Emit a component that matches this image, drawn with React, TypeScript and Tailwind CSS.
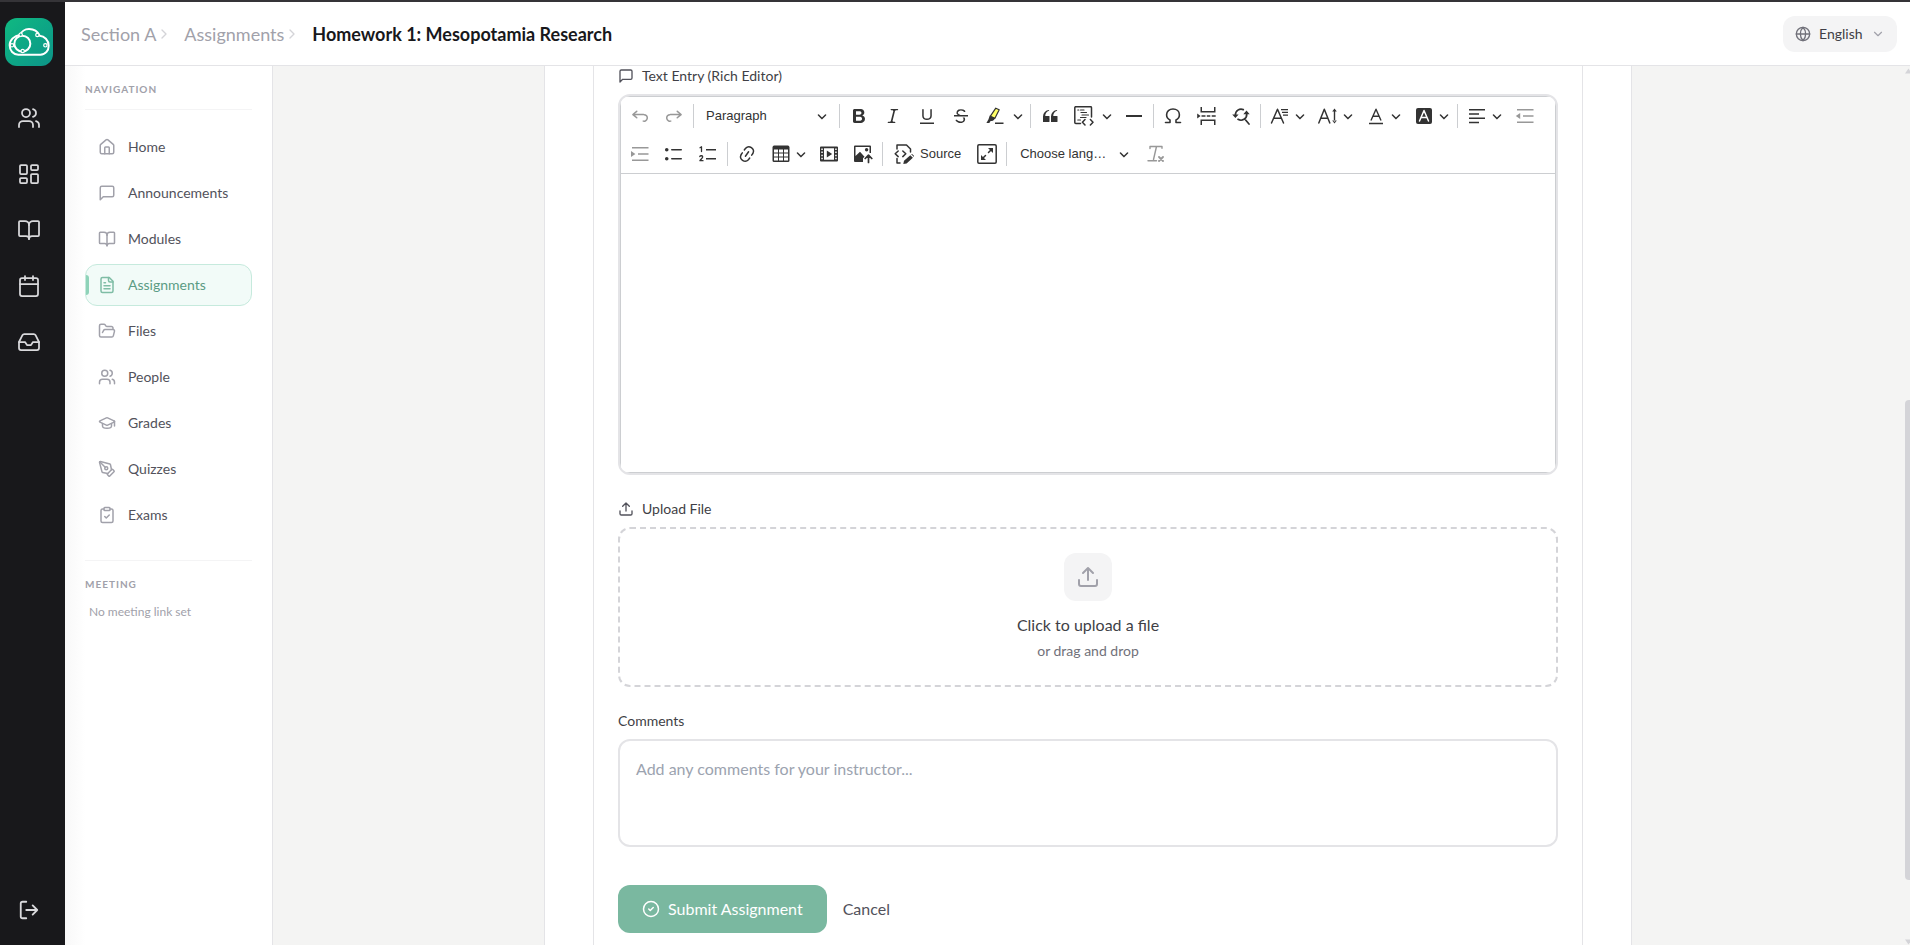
import React from "react";

type Icon = () => React.ReactElement;

/* ---------- outline icons ---------- */

function Line({ size, width = 2, children }: { size: number; width?: number; children: React.ReactNode }) {
  return (
    <svg
      width={size}
      height={size}
      viewBox="0 0 24 24"
      fill="none"
      stroke="currentColor"
      strokeWidth={width}
      strokeLinecap="round"
      strokeLinejoin="round"
      className="shrink-0"
      aria-hidden="true"
    >
      {children}
    </svg>
  );
}

const shapes = {
  users: (
    <>
      <path d="M16 21v-2a4 4 0 0 0-4-4H6a4 4 0 0 0-4 4v2" />
      <circle cx="9" cy="7" r="4" />
      <path d="M22 21v-2a4 4 0 0 0-3-3.87" />
      <path d="M16 3.13a4 4 0 0 1 0 7.75" />
    </>
  ),
  dashboard: (
    <>
      <rect width="7" height="9" x="3" y="3" rx="1" />
      <rect width="7" height="5" x="14" y="3" rx="1" />
      <rect width="7" height="9" x="14" y="12" rx="1" />
      <rect width="7" height="5" x="3" y="16" rx="1" />
    </>
  ),
  book: (
    <>
      <path d="M12 7v14" />
      <path d="M3 18a1 1 0 0 1-1-1V4a1 1 0 0 1 1-1h5a4 4 0 0 1 4 4 4 4 0 0 1 4-4h5a1 1 0 0 1 1 1v13a1 1 0 0 1-1 1h-6a3 3 0 0 0-3 3 3 3 0 0 0-3-3z" />
    </>
  ),
  calendar: (
    <>
      <path d="M8 2v4M16 2v4M3 10h18" />
      <rect width="18" height="18" x="3" y="4" rx="2" />
    </>
  ),
  inbox: (
    <>
      <path d="M22 12h-6l-2 3h-4l-2-3H2" />
      <path d="M5.45 5.11 2 12v6a2 2 0 0 0 2 2h16a2 2 0 0 0 2-2v-6l-3.45-6.89A2 2 0 0 0 16.76 4H7.24a2 2 0 0 0-1.79 1.11z" />
    </>
  ),
  logout: (
    <>
      <path d="M9 21H5a2 2 0 0 1-2-2V5a2 2 0 0 1 2-2h4" />
      <path d="m16 17 5-5-5-5M21 12H9" />
    </>
  ),
  home: (
    <>
      <path d="M15 21v-8a1 1 0 0 0-1-1h-4a1 1 0 0 0-1 1v8" />
      <path d="M3 10a2 2 0 0 1 .709-1.528l7-5.999a2 2 0 0 1 2.582 0l7 5.999A2 2 0 0 1 21 10v9a2 2 0 0 1-2 2H5a2 2 0 0 1-2-2z" />
    </>
  ),
  message: <path d="M21 15a2 2 0 0 1-2 2H7l-4 4V5a2 2 0 0 1 2-2h14a2 2 0 0 1 2 2z" />,
  file: (
    <>
      <path d="M15 2H6a2 2 0 0 0-2 2v16a2 2 0 0 0 2 2h12a2 2 0 0 0 2-2V7Z" />
      <path d="M14 2v4a2 2 0 0 0 2 2h4M10 9H8M16 13H8M16 17H8" />
    </>
  ),
  folder: (
    <path d="m6 14 1.5-2.9A2 2 0 0 1 9.24 10H20a2 2 0 0 1 1.94 2.5l-1.54 6a2 2 0 0 1-1.95 1.5H4a2 2 0 0 1-2-2V5a2 2 0 0 1 2-2h3.9a2 2 0 0 1 1.69.9l.81 1.2a2 2 0 0 0 1.67.9H18a2 2 0 0 1 2 2v2" />
  ),
  grades: (
    <>
      <path d="M21.42 10.922a1 1 0 0 0-.019-1.838L12.83 5.18a2 2 0 0 0-1.66 0L2.6 9.08a1 1 0 0 0 0 1.832l8.57 3.908a2 2 0 0 0 1.66 0z" />
      <path d="M22 10v6" />
      <path d="M6 12.5V16a6 3 0 0 0 12 0v-3.5" />
    </>
  ),
  pen: (
    <>
      <path d="M15.707 21.293a1 1 0 0 1-1.414 0l-1.586-1.586a1 1 0 0 1 0-1.414l5.586-5.586a1 1 0 0 1 1.414 0l1.586 1.586a1 1 0 0 1 0 1.414z" />
      <path d="m18 13-1.375-6.874a1 1 0 0 0-.746-.776L3.235 2.028a1 1 0 0 0-1.207 1.207L5.35 15.879a1 1 0 0 0 .776.746L13 18" />
      <path d="m2.3 2.3 7.286 7.286" />
      <circle cx="11" cy="11" r="2" />
    </>
  ),
  clipboard: (
    <>
      <rect width="8" height="4" x="8" y="2" rx="1" />
      <path d="M16 4h2a2 2 0 0 1 2 2v14a2 2 0 0 1-2 2H6a2 2 0 0 1-2-2V6a2 2 0 0 1 2-2h2" />
      <path d="m9 14 2 2 4-4" />
    </>
  ),
  upload: (
    <>
      <path d="M12 3v12M17 8l-5-5-5 5" />
      <path d="M21 15v4a2 2 0 0 1-2 2H5a2 2 0 0 1-2-2v-4" />
    </>
  ),
  check: (
    <>
      <circle cx="12" cy="12" r="10" />
      <path d="m9 12 2 2 4-4" />
    </>
  ),
  globe: (
    <>
      <circle cx="12" cy="12" r="10" />
      <path d="M12 2a14.5 14.5 0 0 0 0 20 14.5 14.5 0 0 0 0-20M2 12h20" />
    </>
  ),
  right: <path d="m9 18 6-6-6-6" />,
  down: <path d="m6 9 6 6 6-6" />,
};

function Logo() {
  return (
    <svg width="48" height="48" viewBox="0 0 144 144" fill="none" stroke="#fff" aria-hidden="true">
      <path
        strokeWidth="6"
        d="M40 110H106C122 110 131 97 131 83C131 67 118 54 104 53C98 40 86 33 72 33C59 33 49 41 46 50C27 53 14 66 14 82C14 98 25 110 40 110Z"
      />
      <circle cx="52" cy="77" r="24" strokeWidth="6" />
      <g strokeWidth="3.5" fill="#10a684">
        <circle cx="47" cy="50" r="5" />
        <circle cx="97" cy="51" r="5" />
        <circle cx="121" cy="82" r="5" />
        <circle cx="53" cy="99" r="5" />
        <circle cx="21" cy="82" r="5" />
      </g>
    </svg>
  );
}

/* ---------- editor icons, drawn on a 20 unit grid ---------- */

function Glyph({ children }: { children: React.ReactNode }) {
  return (
    <svg width="20" height="20" viewBox="0 0 20 20" fill="currentColor" className="shrink-0" aria-hidden="true">
      {children}
    </svg>
  );
}

function Stroke({ w = 1.5, children }: { w?: number; children: React.ReactNode }) {
  return (
    <g fill="none" stroke="currentColor" strokeWidth={w} strokeLinecap="round" strokeLinejoin="round">
      {children}
    </g>
  );
}

function Arrow() {
  return (
    <svg width="10" height="10" viewBox="0 0 10 10" fill="currentColor" className="shrink-0" aria-hidden="true">
      <path d="M.941 4.523a.75.75 0 1 1 1.06-1.06l3.006 3.005 3.005-3.005a.75.75 0 1 1 1.06 1.06l-3.549 3.55a.75.75 0 0 1-1.168-.136L.941 4.523z" />
    </svg>
  );
}

const undoPath =
  "m5.042 9.367 2.189 1.837a.75.75 0 0 1-.965 1.149l-3.788-3.18a.747.747 0 0 1-.21-.284.75.75 0 0 1 .17-.945L6.23 4.762a.75.75 0 1 1 .964 1.15L4.863 7.866h8.917A.75.75 0 0 1 14 7.9a4 4 0 1 1-1.477 7.718l.344-1.489a2.5 2.5 0 1 0 1.094-4.73l.008-.032H5.042z";

const Undo: Icon = () => <Glyph><path d={undoPath} /></Glyph>;
const Redo: Icon = () => <Glyph><path transform="matrix(-1 0 0 1 20 0)" d={undoPath} /></Glyph>;
const Bold: Icon = () => (
  <Glyph>
    <path d="M10.187 17H5.773c-.637 0-1.092-.138-1.364-.415-.273-.277-.409-.718-.409-1.323V4.738c0-.617.14-1.062.419-1.332.279-.27.73-.406 1.354-.406h4.68c.69 0 1.288.041 1.793.124.506.083.96.242 1.36.478.341.197.644.447.906.75a3.262 3.262 0 0 1 .808 2.162c0 1.401-.722 2.426-2.167 3.075C15.05 10.175 16 11.315 16 13.01a3.756 3.756 0 0 1-2.296 3.504 6.1 6.1 0 0 1-1.517.377c-.571.073-1.238.11-2 .11zm-.217-6.217H7v4.087h3.069c1.977 0 2.965-.69 2.965-2.072 0-.707-.256-1.22-.768-1.537-.512-.319-1.277-.478-2.296-.478zM7 5.13v3.619h2.606c.729 0 1.292-.067 1.69-.2a1.6 1.6 0 0 0 .91-.765c.165-.267.247-.566.247-.897 0-.707-.26-1.176-.778-1.409-.519-.232-1.31-.348-2.375-.348H7z" />
  </Glyph>
);
const Italic: Icon = () => (
  <Glyph>
    <path d="m9.586 14.633.021.004c-.036.335.095.655.393.962.082.083.173.15.274.201h1.474a.6.6 0 1 1 0 1.2H5.304a.6.6 0 0 1 0-1.2h1.15c.474-.07.809-.182 1.005-.334.157-.122.291-.32.404-.597l2.416-9.55a1.053 1.053 0 0 0-.281-.823 1.12 1.12 0 0 0-.442-.296H8.15a.6.6 0 0 1 0-1.2h6.443a.6.6 0 1 1 0 1.2h-1.195c-.376.056-.65.155-.823.296-.215.175-.423.439-.623.79l-2.366 9.347z" />
  </Glyph>
);
const Underline: Icon = () => (
  <Glyph>
    <path d="M3 18v-1.5h14V18zm2.2-8V3.6c0-.4.4-.6.8-.6.3 0 .7.2.7.6v6.2c0 2 1.3 2.8 3.2 2.8 1.9 0 3.4-.9 3.4-2.9V3.6c0-.3.4-.5.8-.5.3 0 .7.2.7.5V10c0 2.7-2.2 4-4.9 4-2.6 0-4.7-1.2-4.7-4z" />
  </Glyph>
);
const Strike: Icon = () => (
  <Glyph>
    <path d="M7 16.4c-.8-.4-1.5-.9-2.2-1.5a.6.6 0 0 1-.2-.5l.3-.6h1c1 1.2 2.1 1.7 3.7 1.7 1 0 1.8-.3 2.3-.6.6-.4.6-1.2.6-1.3.2-1.2-.9-2.1-.9-2.1h2.1c.3.7.4 1.2.4 1.7v.8l-.6 1.2c-.6.8-1.1 1-1.6 1.2a6 6 0 0 1-2.4.6c-1 0-1.8-.3-2.5-.6zM6.8 9 6 8.3c-.4-.5-.5-.8-.5-1.6 0-.7.1-1.3.5-1.8.4-.6 1-1 1.6-1.3a6.3 6.3 0 0 1 4.7 0 4 4 0 0 1 1.7 1l.3.7c0 .1.2.4-.2.7-.4.2-.9.1-1 0a3 3 0 0 0-1.2-1c-.4-.2-1-.3-2-.4-.7 0-1.4.2-2 .6-.8.6-1 .8-1 1.5 0 .8.5 1 1.2 1.5.6.4 1.1.7 1.9 1H6.8zM3 10.5V9h14v1.5z" />
  </Glyph>
);
const Highlight: Icon = () => (
  <Glyph>
    <path fill="#ffff66" stroke="currentColor" strokeWidth="1.2" strokeLinejoin="round" d="M10.8 2.2 14.2 3.8 9.8 12.4 5.4 10.2Z" />
    <path d="M4.8 9.6 10.2 12.5 8 14.8 5.3 15.2 4.4 17H1.4l2-3.4z" />
    <path d="M10 16.5h8.5V18H10z" />
  </Glyph>
);
const Quote: Icon = () => (
  <Glyph>
    <path d="M3 10.423a6.5 6.5 0 0 1 6.056-6.408l.038.67C6.448 5.423 5.354 7.663 5.22 10H9c.552 0 .5.432.5.986v4.511c0 .554-.448.503-1 .503h-5c-.552 0-.5-.449-.5-1.003v-4.574zm8 0a6.5 6.5 0 0 1 6.056-6.408l.038.67c-2.646.739-3.74 2.979-3.873 5.315H17c.552 0 .5.432.5.986v4.511c0 .554-.448.503-1 .503h-5c-.552 0-.5-.449-.5-1.003v-4.574z" />
  </Glyph>
);
const CodeBlock: Icon = () => (
  <Glyph>
    <Stroke w={1.5}>
      <path d="M6.5 17.5H1.8a1 1 0 0 1-1-1V1.7a1 1 0 0 1 1-1H16.5a1 1 0 0 1 1 1V11" />
      <path d="M11 13.5 8.4 16.2 11 18.9M16.4 13.5 19 16.2 16.4 18.9" />
    </Stroke>
    <Stroke w={1.2}>
      <path d="M3.8 4H4.8M6.5 4H10M7 6.5H12.5M8 9H14.5M6.5 11.5H12M3.8 14H6.5" />
    </Stroke>
  </Glyph>
);
const Rule: Icon = () => <Glyph><path d="M2 9h16v2H2z" /></Glyph>;
const Omega: Icon = () => (
  <Glyph>
    <Stroke w={1.6}>
      <path d="M2.5 16.5H7V14C4.7 12.9 3.6 11 3.6 8.8 3.6 5.4 6.3 3 10 3S16.4 5.4 16.4 8.8C16.4 11 15.3 12.9 13 14V16.5H17.5" />
    </Stroke>
  </Glyph>
);
const PageBreak: Icon = () => (
  <Glyph>
    <path d="M3.500 1H5v4H17V1h1.500v5.500h-15zM3.500 19H5v-4H17v4h1.500v-5.500h-15zM.2 7.500 3.600 10 .2 12.500zM4.500 9.200h4v1.600h-4zM9.800 9.200h3.500v1.600H9.800zM14.700 9.200h4v1.600h-4z" />
  </Glyph>
);
const Find: Icon = () => (
  <Glyph>
    <Stroke w={1.7}>
      <path d="M4.4 9A5.7 5.7 0 0 1 12.3 3.6M7 13.3A5.7 5.7 0 0 0 15.7 8M14 13.2 18 18" />
    </Stroke>
    <path d="M1.2 8.5H7.6L4.4 12ZM12.3 8.2 15.5 4.5 18.7 8.2Z" />
  </Glyph>
);
const FontFamily: Icon = () => (
  <Glyph>
    <Stroke w={1.5}>
      <path d="M1.5 17 7.5 3.2 13.5 17M3.8 12.2H11.3" />
    </Stroke>
    <path d="M11 3h7v1.2h-7zM12 5.8h6V7h-6zM13 8.6h5v1.2h-5z" />
  </Glyph>
);
const FontSize: Icon = () => (
  <Glyph>
    <Stroke w={1.5}>
      <path d="M.8 17 6.3 3.2 11.8 17M2.8 12.2H9.8" />
    </Stroke>
    <path d="M15.8 4.5h1.4v11h-1.4zM16.5 2.5 18.8 5.5H14.2ZM16.5 17.5 18.8 14.5H14.2Z" />
  </Glyph>
);
const FontColor: Icon = () => (
  <Glyph>
    <Stroke w={1.4}>
      <path d="M5.2 14 10 3.2 14.8 14M6.9 10.3H13.1" />
    </Stroke>
    <path d="M3 16.8h14v1.5H3z" />
  </Glyph>
);
const FontBackground: Icon = () => (
  <Glyph>
    <rect x="2" y="2" width="16" height="16" rx="2" />
    <g fill="none" stroke="#fff" strokeWidth="1.5" strokeLinecap="round" strokeLinejoin="round">
      <path d="M5.5 15 10 4.5 14.5 15M7 11.5H13" />
    </g>
  </Glyph>
);
const AlignLeft: Icon = () => (
  <Glyph>
    <path d="M2 3h16v1.5H2zM2 7.3h10v1.5H2zM2 11.5h16V13H2zM2 15.7h10v1.5H2z" />
  </Glyph>
);
const Outdent: Icon = () => (
  <Glyph>
    <path d="M2 3h16.5v1.5H2zM8 9.2h10.5v1.5H8zM2 15.5h16.5V17H2zM5.2 7v6L.8 10z" />
  </Glyph>
);
const Indent: Icon = () => (
  <Glyph>
    <path d="M2 3h16.5v1.5H2zM8 9.2h10.5v1.5H8zM2 15.5h16.5V17H2zM1 7v6l4.4-3z" />
  </Glyph>
);
const Bullets: Icon = () => (
  <Glyph>
    <path d="M7 5.75c0 .414.336.75.75.75h9.5a.75.75 0 1 0 0-1.5h-9.5a.75.75 0 0 0-.75.75zm-6 0C1 4.784 1.777 4 2.75 4c.966 0 1.75.777 1.75 1.75 0 .966-.777 1.75-1.75 1.75C1.784 7.5 1 6.723 1 5.75zm6 9c0 .414.336.75.75.75h9.5a.75.75 0 1 0 0-1.5h-9.5a.75.75 0 0 0-.75.75zm-6 0c0-.966.777-1.75 1.75-1.75.966 0 1.75.777 1.75 1.75 0 .966-.777 1.75-1.75 1.75-.966 0-1.75-.777-1.75-1.75z" />
  </Glyph>
);
const Numbers: Icon = () => (
  <Glyph>
    <path d="M8 5h10v1.5H8zM8 14h10v1.5H8z" />
    <Stroke w={1.3}>
      <path d="M2 3.7 3.5 2.8V7.5M1.8 12.6C2.3 11.3 4.8 11.5 4.7 13 4.6 14.2 2.6 15.3 1.9 16.7H5" />
    </Stroke>
  </Glyph>
);
const LinkIcon: Icon = () => (
  <Glyph>
    <path d="m11.077 15 .991-1.416a.75.75 0 1 1 1.229.86l-1.148 1.64a.748.748 0 0 1-.217.206 5.251 5.251 0 0 1-8.503-5.955.741.741 0 0 1 .12-.274l1.147-1.639a.75.75 0 1 1 1.228.86L4.933 10.7l.006.003a3.75 3.75 0 0 0 6.132 4.294l.006.004zm5.494-5.335a.748.748 0 0 1-.12.274l-1.147 1.639a.75.75 0 1 1-1.228-.86l.86-1.23a3.75 3.75 0 0 0-6.144-4.301l-.86 1.229a.75.75 0 0 1-1.229-.86l1.148-1.64a.748.748 0 0 1 .217-.206 5.251 5.251 0 0 1 8.503 5.955zm-4.563-2.532a.75.75 0 0 1 .184 1.045l-3.155 4.505a.75.75 0 1 1-1.229-.86l3.155-4.506a.75.75 0 0 1 1.045-.184z" />
  </Glyph>
);
const TableIcon: Icon = () => (
  <Glyph>
    <path d="M3 5.5v3h4v-3H3zm0 4v3h4v-3H3zm0 4v3h4v-3H3zm5 3h4v-3H8v3zm5 0h4v-3h-4v3zm4-4v-3h-4v3h4zm0-4v-3h-4v3h4zm1.5 8A1.5 1.5 0 0 1 17 18H3a1.5 1.5 0 0 1-1.5-1.5V3c.222-.863 1.068-1.5 2-1.5h13c.932 0 1.778.637 2 1.5v13.5zM12 12.5v-3H8v3h4zm0-4v-3H8v3h4z" />
  </Glyph>
);
const Media: Icon = () => (
  <Glyph>
    <path
      fillRule="evenodd"
      d="M2 2.5h16a1 1 0 0 1 1 1v13a1 1 0 0 1-1 1H2a1 1 0 0 1-1-1v-13a1 1 0 0 1 1-1zM5 4.3v11.4h10V4.3zM2.3 4.5V6h1.5V4.5zm0 3V9h1.5V7.5zm0 3.2v1.5h1.5v-1.5zm0 3.1v1.5h1.5v-1.5zM16.2 4.5V6h1.5V4.5zm0 3V9h1.5V7.5zm0 3.2v1.5h1.5v-1.5zm0 3.1v1.5h1.5v-1.5z"
    />
    <path d="M7.8 6.5 13.2 10l-5.4 3.5z" />
  </Glyph>
);
const ImageIcon: Icon = () => (
  <Glyph>
    <path
      fillRule="evenodd"
      d="M2 1.5h15a1 1 0 0 1 1 1V9h-1.500V3h-14v9L7 7.800l4.500 5-1.500 1.500V18H2a1 1 0 0 1-1-1V2.500a1 1 0 0 1 1-1z"
    />
    <circle cx="13.6" cy="5.8" r="1.7" />
    <Stroke w={1.7}>
      <path d="M15.5 18.5V11.5M12.2 14.5 15.5 11.2 18.8 14.5" />
    </Stroke>
  </Glyph>
);
const SourceIcon: Icon = () => (
  <Glyph>
    <Stroke w={1.5}>
      <path d="M3 5V1H12.5L16.5 5V8M3 14.5V19H6" />
      <path d="M4.2 7 1.2 9.8 4.2 12.6M8.8 7 11.8 9.8 8.8 12.6" />
    </Stroke>
    <path d="M16.3 11.2 18.9 13.7 12.6 19.4 9.3 20 10 16.8ZM17.2 10.3a.9.9 0 0 1 1.2 0l1.3 1.3a.8.8 0 0 1 0 1.2z" />
  </Glyph>
);
const Fullscreen: Icon = () => (
  <Glyph>
    <Stroke w={1.5}>
      <rect x=".8" y=".8" width="18.4" height="18.4" rx="1.2" />
      <path d="M11.5 8.5 15 5M8.5 11.5 5 15" />
    </Stroke>
    <path d="M11 4h5v5zM4 11v5h5z" />
  </Glyph>
);
const RemoveFormat: Icon = () => (
  <Glyph>
    <Stroke w={1.4}>
      <path d="M4 4.5V2.5H16V4.2M10.5 2.5 7.5 15.5M2 16.7H10.5" />
    </Stroke>
    <Stroke w={1.8}>
      <path d="M13 13 17 17M17 13 13 17" />
    </Stroke>
  </Glyph>
);

/* ---------- toolbar ---------- */

function Tool({ label, icon: I, off }: { label: string; icon: Icon; off?: boolean }) {
  return (
    <button
      type="button"
      aria-label={label}
      disabled={off}
      className="flex size-[30px] items-center justify-center rounded-sm disabled:opacity-50"
    >
      <I />
    </button>
  );
}

function Menu({ label, icon: I }: { label: string; icon: Icon }) {
  return (
    <button type="button" aria-label={label} aria-haspopup="menu" className="flex h-[30px] w-11 items-center gap-[5px] rounded-sm pl-[5px]">
      <I />
      <Arrow />
    </button>
  );
}

function Split({ label, icon }: { label: string; icon: Icon }) {
  return (
    <div className="flex">
      <Tool label={label} icon={icon} />
      <button type="button" aria-label={`${label} options`} aria-haspopup="menu" className="flex h-[30px] w-4 items-center justify-center">
        <Arrow />
      </button>
    </div>
  );
}

function Divider() {
  return <span className="my-[3px] w-px self-stretch bg-[#ccced1]" />;
}

function Toolbar() {
  return (
    <div
      role="toolbar"
      aria-label="Editor toolbar"
      className="flex flex-wrap items-center gap-x-1 gap-y-2 border-b border-[#ccced1] p-1 font-['Liberation_Sans',Arial,sans-serif] text-[13px] text-[#333]"
    >
      <Tool label="Undo" icon={Undo} off />
      <Tool label="Redo" icon={Redo} off />
      <Divider />
      <div className="relative flex items-center">
        <select aria-label="Heading" className="h-[30px] w-[137px] appearance-none bg-transparent pr-6 pl-2">
          <option>Paragraph</option>
          <option>Heading 1</option>
          <option>Heading 2</option>
        </select>
        <span className="pointer-events-none absolute right-2">
          <Arrow />
        </span>
      </div>
      <Divider />
      <Tool label="Bold" icon={Bold} />
      <Tool label="Italic" icon={Italic} />
      <Tool label="Underline" icon={Underline} />
      <Tool label="Strikethrough" icon={Strike} />
      <Split label="Highlight" icon={Highlight} />
      <Divider />
      <Tool label="Block quote" icon={Quote} />
      <Split label="Code block" icon={CodeBlock} />
      <Tool label="Horizontal line" icon={Rule} />
      <Divider />
      <Tool label="Special characters" icon={Omega} />
      <Tool label="Page break" icon={PageBreak} />
      <Tool label="Find and replace" icon={Find} />
      <Divider />
      <Menu label="Font family" icon={FontFamily} />
      <Menu label="Font size" icon={FontSize} />
      <Menu label="Font color" icon={FontColor} />
      <Menu label="Font background color" icon={FontBackground} />
      <Divider />
      <Menu label="Text alignment" icon={AlignLeft} />
      <Tool label="Decrease indent" icon={Outdent} off />
      <Tool label="Increase indent" icon={Indent} off />
      <Tool label="Bulleted list" icon={Bullets} />
      <Tool label="Numbered list" icon={Numbers} />
      <Divider />
      <Tool label="Link" icon={LinkIcon} />
      <Menu label="Insert table" icon={TableIcon} />
      <Tool label="Insert media" icon={Media} />
      <Tool label="Upload image" icon={ImageIcon} />
      <Divider />
      <button type="button" className="flex h-[30px] items-center gap-[6px] px-[7px]">
        <SourceIcon />
        Source
      </button>
      <Tool label="Fullscreen" icon={Fullscreen} />
      <Divider />
      <div className="relative flex items-center">
        <select aria-label="Language" className="h-[30px] w-[126px] appearance-none truncate bg-transparent pr-6 pl-[9px]">
          <option>Choose language</option>
        </select>
        <span className="pointer-events-none absolute right-2">
          <Arrow />
        </span>
      </div>
      <Tool label="Remove format" icon={RemoveFormat} off />
    </div>
  );
}

/* ---------- page ---------- */

const rail: [string, React.ReactNode][] = [
  ["People", shapes.users],
  ["Dashboard", shapes.dashboard],
  ["Courses", shapes.book],
  ["Calendar", shapes.calendar],
  ["Inbox", shapes.inbox],
];

const nav: [string, React.ReactNode][] = [
  ["Home", shapes.home],
  ["Announcements", shapes.message],
  ["Modules", shapes.book],
  ["Assignments", shapes.file],
  ["Files", shapes.folder],
  ["People", shapes.users],
  ["Grades", shapes.grades],
  ["Quizzes", shapes.pen],
  ["Exams", shapes.clipboard],
];

function Rail() {
  return (
    <nav aria-label="Main" className="flex w-[65px] shrink-0 flex-col bg-[#18181b] pt-4 pr-[7px] pb-[15px] text-[#d9d9dc]">
      <a href="#" aria-label="Start page" className="size-12 self-center rounded-xl bg-linear-to-br from-[#10b981] to-[#0d9488]">
        <Logo />
      </a>
      <div className="mt-[30px] flex flex-col items-center gap-3">
        {rail.map(([name, shape]) => (
          <a key={name} href="#" aria-label={name} className="flex size-11 items-center justify-center">
            <Line size={24} width={1.75}>{shape}</Line>
          </a>
        ))}
      </div>
      <button type="button" aria-label="Log out" className="mt-auto flex h-10 w-11 items-center justify-center self-center">
        <Line size={22} width={2}>{shapes.logout}</Line>
      </button>
    </nav>
  );
}

function Header() {
  return (
    <header className="flex h-16 shrink-0 items-center justify-between border-b border-[#e4e4e7] bg-white pr-[13px] pl-4">
      <nav aria-label="Breadcrumb" className="flex items-center gap-3 text-lg text-[#a1a1aa]">
        <span className="flex items-center">
          <a href="#">Section A</a>
          <span className="text-[#d4d4d8]"><Line size={16}>{shapes.right}</Line></span>
        </span>
        <span className="flex items-center">
          <a href="#">Assignments</a>
          <span className="text-[#d4d4d8]"><Line size={16}>{shapes.right}</Line></span>
        </span>
        <h1 className="font-bold text-[#18181b]">Homework 1: Mesopotamia Research</h1>
      </nav>
      <label className="flex h-9 items-center gap-2 rounded-xl bg-[#f4f4f5] px-3 text-sm text-[#3f3f46]">
        <span className="text-[#71717a]"><Line size={16}>{shapes.globe}</Line></span>
        <select aria-label="Language" className="appearance-none bg-transparent">
          <option>English</option>
        </select>
        <span className="text-[#a1a1aa]"><Line size={14}>{shapes.down}</Line></span>
      </label>
    </header>
  );
}

function Sidebar() {
  return (
    <aside className="w-52 shrink-0 border-r border-[#e4e4e7] bg-linear-to-r from-[#f8f8f8] to-white to-10% px-5 pt-4">
      <h2 className="border-b border-[#f4f4f5] pb-3 text-[10px] leading-[15px] font-bold tracking-widest text-[#a1a1aa]">
        NAVIGATION
      </h2>
      <ul className="mt-4 flex flex-col gap-1">
        {nav.map(([name, shape]) => {
          const active = name === "Assignments";
          return (
            <li key={name}>
              <a
                href="#"
                className={
                  active
                    ? "relative flex h-[42px] items-center gap-3 rounded-xl border border-[#c6eadd] bg-[#f2fbf8] px-3 text-sm text-[#5b9c84]"
                    : "flex h-[42px] items-center gap-3 rounded-xl border border-transparent px-3 text-sm text-[#52525b]"
                }
              >
                {active && <span className="absolute left-0 h-5 w-[3px] rounded-r-full bg-[#8fd3b9]" />}
                <span className={active ? "text-[#7fbda5]" : "text-[#a1a1aa]"}>
                  <Line size={18}>{shape}</Line>
                </span>
                {name}
              </a>
            </li>
          );
        })}
      </ul>
      <h2 className="mt-6 border-t border-[#f4f4f5] pt-4 text-[10px] leading-[15px] font-bold tracking-widest text-[#a1a1aa]">
        MEETING
      </h2>
      <p className="mt-3 px-1 text-xs text-[#a1a1aa]">No meeting link set</p>
    </aside>
  );
}

function Submission() {
  return (
    <form className="flex grow flex-col gap-6 border-x border-[#e4e4e7] px-6 text-sm text-[#3f3f46]">
      <section>
        <h3 className="mb-2 flex items-center gap-2">
          <span className="text-[#52525b]"><Line size={16}>{shapes.message}</Line></span>
          Text Entry (Rich Editor)
        </h3>
        <div className="overflow-hidden rounded-xl border-2 border-[#e4e4e7]">
          <div className="border border-[#ccced1]">
            <Toolbar />
            <div contentEditable suppressContentEditableWarning role="textbox" aria-label="Text entry" className="h-[298px]" />
          </div>
        </div>
      </section>

      <section>
        <h3 className="mb-2 flex items-center gap-2">
          <span className="text-[#52525b]"><Line size={16}>{shapes.upload}</Line></span>
          Upload File
        </h3>
        <button
          type="button"
          className="flex w-full flex-col items-center rounded-xl border-2 border-dashed border-[#d4d4d8] p-6"
        >
          <span className="flex size-12 items-center justify-center rounded-xl bg-[#f4f4f5] text-[#a1a1aa]">
            <Line size={24}>{shapes.upload}</Line>
          </span>
          <span className="mt-3 text-base">Click to upload a file</span>
          <span className="mt-1 text-[#71717a]">or drag and drop</span>
        </button>
      </section>

      <section>
        <label htmlFor="comments" className="mb-2 block">Comments</label>
        <textarea
          id="comments"
          rows={3}
          placeholder="Add any comments for your instructor..."
          className="block w-full resize-none rounded-xl border-2 border-[#e4e4e7] p-4 text-base placeholder:text-[#9ca3af]"
        />
      </section>

      <div className="mt-[14px] flex items-center text-base">
        <button type="submit" className="flex h-12 items-center gap-2 rounded-xl bg-[#7ab8a0] px-6 text-white">
          <Line size={18}>{shapes.check}</Line>
          Submit Assignment
        </button>
        <button type="button" className="h-12 px-4 text-[#52525b]">Cancel</button>
      </div>
    </form>
  );
}

export default function App() {
  return (
    <div className="flex h-screen flex-col overflow-hidden border-t-2 border-[#353438] bg-[#f4f4f3] font-[Lato,sans-serif]">
      <div className="flex min-h-0 grow">
        <Rail />
        <div className="flex min-w-0 grow flex-col">
          <Header />
          <div className="flex min-h-0 grow">
            <Sidebar />
            <main className="relative flex min-w-0 grow justify-center overflow-hidden pr-[7px]">
              <div className="flex w-full max-w-[1088px] border-x border-[#e4e4e7] bg-white px-12">
                <Submission />
              </div>
              <div className="absolute inset-y-0 right-0 flex w-[5px] flex-col items-start overflow-hidden text-[#d4d4d8]" aria-hidden="true">
                <svg width="8" height="8" viewBox="0 0 8 8" fill="currentColor" className="shrink-0">
                  <path d="M0 7.5 3.5 2.5 7 7.5z" />
                </svg>
                <div className="mt-[326px] mb-[57px] w-full grow rounded-l-sm bg-[#d4d4d8]" />
                <svg width="8" height="8" viewBox="0 0 8 8" fill="currentColor" className="shrink-0">
                  <path d="M0 2.5H7L3.5 7.5z" />
                </svg>
              </div>
            </main>
          </div>
        </div>
      </div>
    </div>
  );
}
